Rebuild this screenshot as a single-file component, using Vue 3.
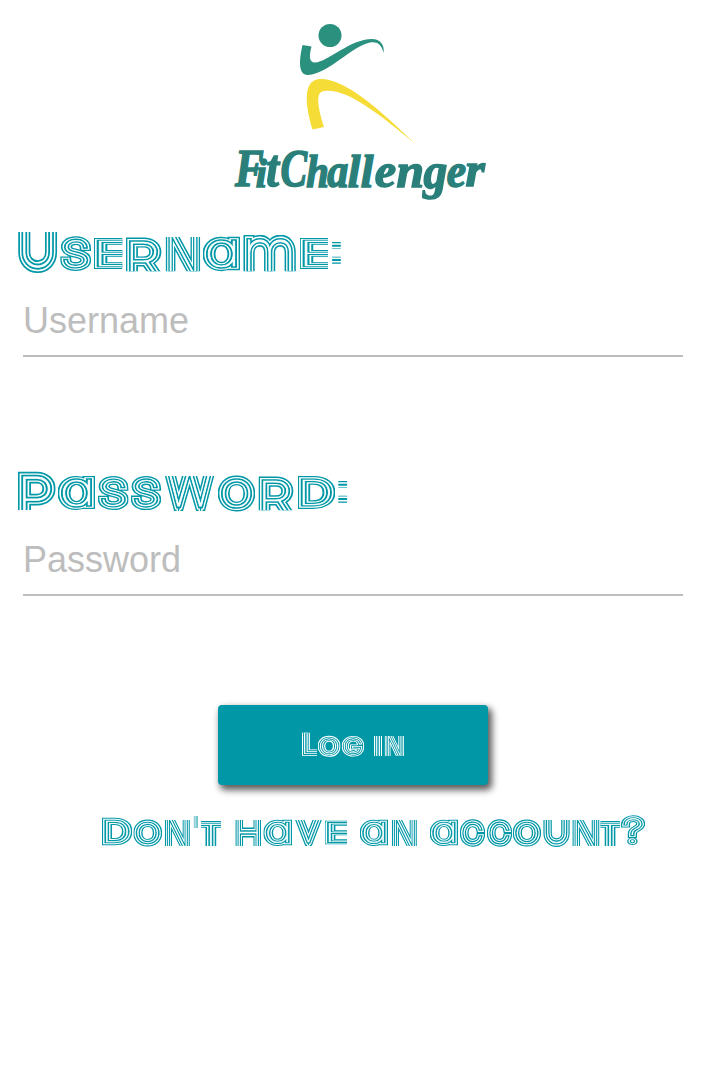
<script setup>
import { ref, onMounted } from 'vue'

const cap = 12.2
const small = 11
// [char, left, top, right, bottom, stem thickness, open sides]
const username = [
  ['U', 17.7, 232, 57.7, 273, cap, 't'], ['S', 60.3, 235.7, 91, 272, 10.2, ''],
  ['E', 94, 237, 122.3, 271.3, small, 'r'], ['R', 126, 237, 163, 271.3, small, 'b'],
  ['N', 165, 237, 201, 271.3, small, 'tb'], ['a', 203, 235.5, 240, 272, small, ''],
  ['m', 243, 235, 296, 271.3, small, 'b'], ['E', 300, 237, 328, 271.3, small, 'r'],
  [':', 332, 242, 341, 264, small, 'c']
]
const password = [
  ['P', 18, 471, 55.7, 510, cap, 'b'], ['a', 58, 475, 95, 511, small, ''],
  ['S', 98, 475, 128.5, 511, 10.2, ''], ['S', 131, 475, 161, 511, 10.2, ''],
  ['w', 163, 476, 216, 511, small, 't'], ['O', 218, 474.5, 255, 512, small, ''],
  ['R', 258.6, 476, 295, 510.3, small, 'b'], ['D', 298, 476, 335, 510.3, small, ''],
  [':', 338, 481, 347.3, 503, small, 'c']
]
const login = [
  ['L', 302, 732.7, 317, 756, 7.4, 'tr'], ['O', 318, 735, 340.5, 757, 7.4, ''],
  ['G', 342, 735, 364, 757, 7, ''], ['I', 374, 736, 382, 756, 7.6, 'tb'],
  ['N', 384, 736, 404.5, 756, 7.4, 'tb']
]
const account = [
  ['D', 102, 817, 132, 846, 9.2, ''], ['O', 133.5, 819, 162, 847, 8.8, ''],
  ['N', 164, 820, 190.5, 846, 8.8, 'tb'], ["'", 192, 816, 199.5, 828, 7.5, 'tb'],
  ['T', 201, 820, 221, 846, 8.8, 'lrb'], ['H', 235, 820, 262, 846, 8.8, 'tb'],
  ['a', 263.5, 819, 292, 847, 8.8, ''], ['V', 293.500, 820, 323.5, 846, 8.8, 't'],
  ['E', 325, 820, 347, 846, 8.8, 'r'], ['a', 360, 819, 388, 847, 8.8, ''],
  ['N', 391, 820, 417.5, 846, 8.8, 'tb'], ['a', 430, 819, 458, 847, 8.8, ''],
  ['C', 460, 819, 485, 847, 8.8, ''], ['C', 487, 819, 512, 847, 8.8, ''],
  ['O', 513, 819, 541, 847, 8.8, ''], ['U', 543, 820, 570, 847, 8.8, 't'],
  ['N', 572, 820, 600, 846, 8.8, 'tb'], ['T', 600.5, 820, 620, 846, 8.8, 'lrb'],
  ['?', 621, 815, 645, 846, 8.2, '']
]
// wordmark letters: [char, left, top, right, bottom]
const brand = [
  ['F', 234, 151, 264, 187], ['i', 256, 158, 267.500, 187.5], ['t', 267, 156, 281, 187.5],
  ['C', 281, 151, 308, 188], ['h', 306, 154, 327.5, 187.5], ['a', 327, 163, 348, 187.7],
  ['l', 348, 154, 361, 187.7], ['l', 361, 154, 374, 187.7], ['e', 375, 163, 396, 187.7],
  ['n', 397, 163, 422.5, 187.5], ['g', 422, 163, 447, 199], ['e', 447, 163, 466, 187.7],
  ['r', 466, 163, 486, 187]
]

const words = ref({})
const mark = ref([])
const blocks = { user: [360, 55], pass: [360, 55], log: [270, 80], acc: [570, 45] }

onMounted(() => {
  const c = document.createElement('canvas').getContext('2d')
  const ink = (ch, font) => {
    c.font = font
    const m = c.measureText(ch)
    return [-m.actualBoundingBoxLeft, -m.actualBoundingBoxAscent, m.actualBoundingBoxRight, m.actualBoundingBoxDescent]
  }
  const matrix = ([il, it, ir, ib], l, t, r, b) => {
    const sx = Math.max(r - l, 0.6) / (ir - il)
    const sy = Math.max(b - t, 0.6) / (ib - it)
    return `matrix(${sx} 0 0 ${sy} ${l - il * sx} ${t - it * sy})`
  }
  const fit = (list, key, x0, y0) => list.map(([ch, l, t, r, b, s, open], i) => {
    const dots = open === 'c'
    // the single-storey a shares its outline with the Latin alpha
    const box = ink(ch === 'a' ? '\u0251' : ch, dots ? 'bold 100px "Liberation Sans"' : '100 100px Inter')
    const sw = dots ? 1.6 : s - 1
    const side = k => !dots && open.includes(k) ? -sw / 2 - 1 : sw / 2
    return {
      id: key + i, ch, dots, x: l - x0, y: t - y0, w: r - l, h: b - t,
      tr: matrix(box, l - x0 + side('l'), t - y0 + side('t'), r - x0 - side('r'), b - y0 - side('b')),
      widths: [sw, s * 0.71 - 1, s * 0.46 - 1, Math.max(s * 0.16 - 1, 0.3)]
    }
  })
  words.value = {
    user: fit(username, 'u', 0, 225), pass: fit(password, 'p', 0, 464),
    log: fit(login, 'l', 218, 705), acc: fit(account, 'a', 90, 808)
  }
  mark.value = brand.map(([ch, l, t, r, b]) => ({
    ch, tr: matrix(ink(ch, 'italic bold 100px "Liberation Serif"'), l - 219.4, t - 9.4, r - 220.6, b - 10.6)
  }))
})
</script>

<template>
  <main class="page">
    <svg class="logo" viewBox="0 0 280 200" width="280" height="200">
      <circle cx="110" cy="25.500" r="11.500" fill="#2a917f" />
      <path d="M82.500 35L91.500 36.500C89 46 89 52.500 95 52.500C108 52 130 29 152 29C160 29 165 35 163.500 43C161.500 34 157 31.500 150 32.500C132 36 107 65 87 65C77 64 80 46 82.500 35Z" fill="#2a917f" />
      <path d="M92.500 119.500L104 117C99 101 94 82 104 81C127 78 159 104 195 133.500C161 101 126 69 101 69C81 69 86 98 92.500 119.500Z" fill="#f6dc36" />
      <text v-for="(g, i) in mark" :key="i" class="brand" :transform="g.tr">{{ g.ch }}</text>
    </svg>
    <template v-for="(size, k) in blocks" :key="k">
      <component :is="k === 'log' ? 'button' : 'div'" :class="['block', k]">
        <svg class="neon" :width="size[0]" :height="size[1]">
          <template v-for="g in words[k]" :key="g.id">
            <clipPath :id="'c' + g.id"><rect :x="g.x" :y="g.y" :width="g.w" :height="g.h" /></clipPath>
            <g :clip-path="`url(#c${g.id})`">
              <template v-if="g.dots">
                <g class="ink" stroke-width="1.6"><text :transform="g.tr" class="glyph colon">{{ g.ch }}</text></g>
                <path class="gaps" :transform="`translate(${g.x} ${g.y})`" d="M0 2h9.500M0 5.500h9.500M0 16.200h9.500M0 19.700h9.500" />
              </template>
              <template v-else>
                <g class="ink" :stroke-width="g.widths[0]"><text :id="g.id" :transform="g.tr" class="glyph">{{ g.ch }}</text></g>
                <use :href="'#' + g.id" class="gap" :stroke-width="g.widths[1]" />
                <use :href="'#' + g.id" class="ink" :stroke-width="g.widths[2]" />
                <use :href="'#' + g.id" class="gap" :stroke-width="g.widths[3]" />
              </template>
            </g>
          </template>
        </svg>
      </component>
      <input v-if="k === 'user'" class="field" placeholder="Username" />
      <input v-if="k === 'pass'" class="field" type="password" placeholder="Password" />
    </template>
  </main>
</template>

<style>
body { margin: 0; background: #fff; }
</style>
<style scoped>
.page { --ink: #0097a7; --gap: #fff; width: 720px; height: 1080px; display: flex; flex-direction: column; background: #fff; }
svg { display: block; overflow: visible; }
.neon { will-change: transform; }
.logo { margin: 10px 0 15px 220px; flex: none; }
.brand { font: italic bold 100px "Liberation Serif", serif; fill: #2a7f7a; stroke: #2a7f7a; stroke-width: 1.5px; vector-effect: non-scaling-stroke; }
.block { flex: none; }
.glyph { font-family: Inter, sans-serif; font-size: 100px; font-weight: 100; font-feature-settings: "cv11" 1; vector-effect: non-scaling-stroke; stroke-miterlimit: 6; }
.colon { font-family: "Liberation Sans", sans-serif; font-weight: 700; }
.ink { stroke: var(--ink); fill: var(--ink); }
.gap { stroke: var(--gap); fill: var(--gap); }
.gaps { stroke: #fff; stroke-width: 1.5px; }
.field { box-sizing: border-box; flex: none; width: 660px; height: 77px; margin: 0 0 107px 23px; padding: 6px 0 0; border: 0; border-bottom: 2px solid #bdbdbd; border-radius: 0; outline: 0; background: transparent; font: 36px "Liberation Sans", Arial, sans-serif; }
.field::placeholder { color: #bdbdbd; opacity: 1; }
.log { --ink: #fff; --gap: #0097a7; width: 270px; height: 80px; margin: 2px 0 23px 218px; padding: 0; border: 0; border-radius: 4px; background: #0097a7; box-shadow: 3px 4px 7px 1px rgba(0, 0, 0, .65); }
.acc { margin-left: 90px; }
</style>
